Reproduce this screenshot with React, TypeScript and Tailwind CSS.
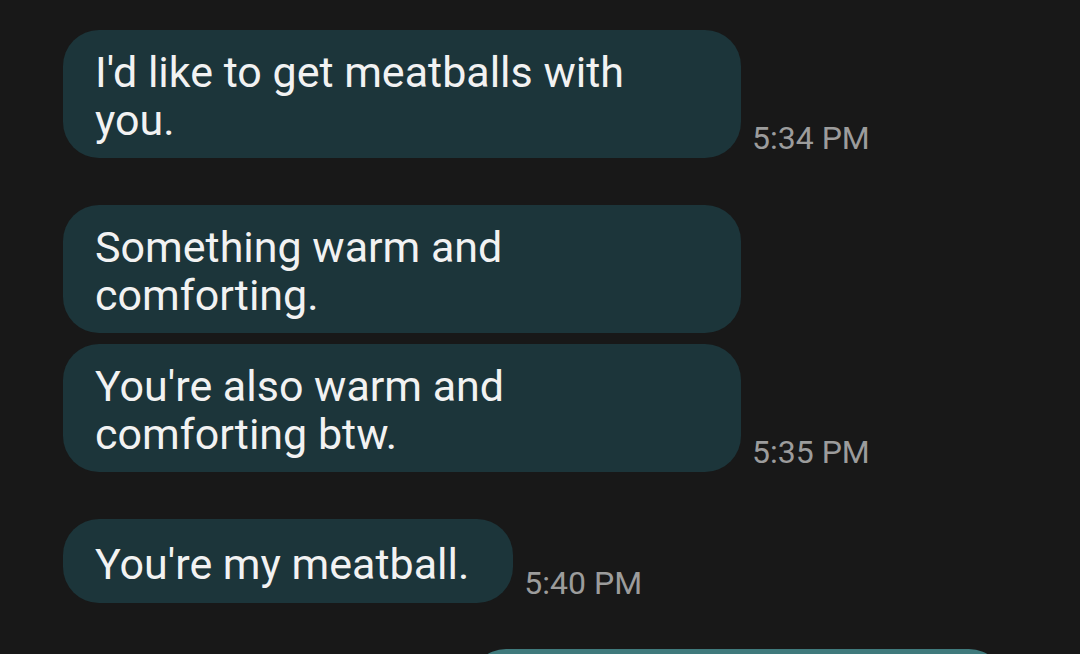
import React from 'react';

type Msg = { text: string; time?: string; short?: boolean; gapTop: number };

const messages: Msg[] = [
  { text: "I'd like to get meatballs with you.", time: '5:34 PM', gapTop: 30 },
  { text: 'Something warm and comforting.', gapTop: 47 },
  { text: "You're also warm and comforting btw.", time: '5:35 PM', gapTop: 11 },
  { text: "You're my meatball.", time: '5:40 PM', short: true, gapTop: 47 },
];

const Bubble: React.FC<{ msg: Msg }> = ({ msg }) => (
  <div className="flex items-end gap-[11px]" style={{ marginTop: msg.gapTop }}>
    <div
      className={`max-w-[678px] rounded-[36px] bg-[#1c353a] pl-[32px] pr-[44px] text-[43px] leading-[48px] text-[#f2f2f2] ${
        msg.short ? 'pt-[21px] pb-[15px]' : 'pt-[18px] pb-[14px]'
      }`}
    >
      {msg.text}
    </div>
    {msg.time && (
      <span className="shrink-0 text-[32px] leading-[37px] text-[#9c9c9c] mb-[1px]">{msg.time}</span>
    )}
  </div>
);

export default function App() {
  return (
    <div
      className="w-[1080px] h-[654px] overflow-hidden bg-[#181818] flex flex-col pl-[63px]"
      style={{ fontFamily: 'Roboto, "Noto Sans", sans-serif' }}
    >
      {messages.map((m, i) => (
        <Bubble key={i} msg={m} />
      ))}
      <div className="self-end mr-[75px] mt-[46px] w-[535px] h-[80px] shrink-0 rounded-[36px] bg-[#3f7a7c]" />
    </div>
  );
}
